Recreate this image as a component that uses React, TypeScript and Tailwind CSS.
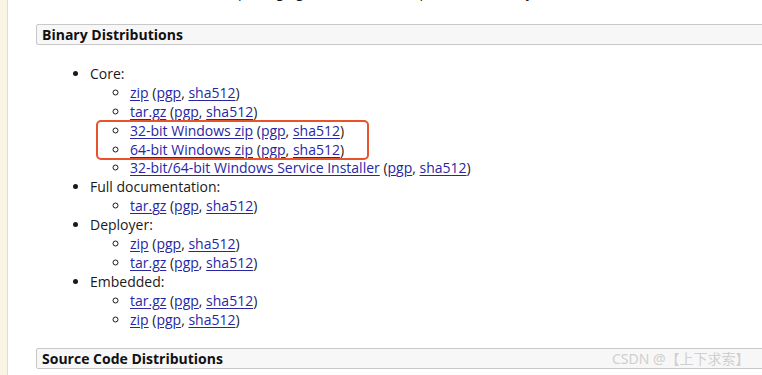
type Entry = { label: string; links: string[] };
type Group = { title: string; items: Entry[] };

const groups: Group[] = [
  {
    title: "Core:",
    items: [
      { label: "zip", links: ["pgp", "sha512"] },
      { label: "tar.gz", links: ["pgp", "sha512"] },
      { label: "32-bit Windows zip", links: ["pgp", "sha512"] },
      { label: "64-bit Windows zip", links: ["pgp", "sha512"] },
      { label: "32-bit/64-bit Windows Service Installer", links: ["pgp", "sha512"] },
    ],
  },
  { title: "Full documentation:", items: [{ label: "tar.gz", links: ["pgp", "sha512"] }] },
  {
    title: "Deployer:",
    items: [
      { label: "zip", links: ["pgp", "sha512"] },
      { label: "tar.gz", links: ["pgp", "sha512"] },
    ],
  },
  {
    title: "Embedded:",
    items: [
      { label: "tar.gz", links: ["pgp", "sha512"] },
      { label: "zip", links: ["pgp", "sha512"] },
    ],
  },
];

function Link({ children }: { children: React.ReactNode }) {
  return <a className="text-[#2727a5] underline underline-offset-2">{children}</a>;
}

function Item({ entry }: { entry: Entry }) {
  return (
    <li>
      <Link>{entry.label}</Link> (<Link>{entry.links[0]}</Link>, <Link>{entry.links[1]}</Link>)
    </li>
  );
}

function SectionHeader({ title }: { title: string }) {
  return (
    <div className="h-[21px] -mr-[20px] border border-[#c8c8c8] bg-[#f7f7f7] rounded-[2px] pl-[5px] font-bold text-[14px] leading-[19px] text-[#111]">
      {title}
    </div>
  );
}

export default function App() {
  return (
    <div
      className="relative flex w-[762px] h-[375px] overflow-hidden bg-white text-[14px] leading-[18.9px] text-[#1a1a1a]"
      style={{ fontFamily: '"Open Sans", "Noto Sans", sans-serif' }}
    >
      <div className="w-[8px] shrink-0 bg-[#f8f5e4] border-r border-[#dcdcdc]"></div>
      <div className="flex-1 pl-[28px]">
        <p className="-mt-[17px] whitespace-nowrap">
          Please see the <Link>README</Link> file for packaging information. It explains what every distribution contains.
        </p>
        <div className="mt-[22px]">
          <SectionHeader title="Binary Distributions" />
        </div>
        <ul className="list-disc pl-[54px] mt-[20px]">
          {groups.map((g) => (
            <li key={g.title}>
              {g.title}
              <ul className="list-[circle] pl-[40px]">
                {g.items.map((e, i) => (
                  <Item key={i} entry={e} />
                ))}
              </ul>
            </li>
          ))}
        </ul>
        <div className="mt-[18px]">
          <SectionHeader title="Source Code Distributions" />
        </div>
      </div>

      {/* highlight box drawn on the screenshot */}
      <div className="absolute left-[96px] top-[120px] w-[273px] h-[40px] border-2 border-[#e9532b] rounded-[5px]"></div>

      {/* watermark */}
      <div
        className="absolute left-[612px] top-[350px] text-[14px] text-[#cfcfcf] whitespace-nowrap"
        style={{ fontFamily: '"Noto Sans", "Noto Sans CJK SC", sans-serif' }}
      >
        CSDN @【上下求索】
      </div>
    </div>
  );
}
